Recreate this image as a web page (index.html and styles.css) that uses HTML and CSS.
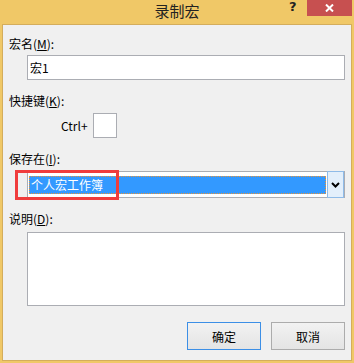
FILE: index.html
```html
<!DOCTYPE html>
<html lang="zh-CN">
<head>
  <meta charset="UTF-8">
  <meta name="viewport" content="width=device-width, initial-scale=1.0">
  <title>录制宏</title>
  <link rel="stylesheet" href="styles.css">
</head>
<body>
  <div class="window">
    <div class="titlebar">
      <span class="title">录制宏</span>
      <span class="help">?</span>
      <span class="close">
        <svg width="9" height="8" viewBox="0 0 9 8"><path d="M1 0.5 L8 7.5 M8 0.5 L1 7.5" stroke="#fff" stroke-width="2"/></svg>
      </span>
    </div>

    <div class="client">
      <div class="label">宏名(<u>M</u>):</div>
      <div class="field name-field">宏1</div>

      <div class="label gap">快捷键(<u>K</u>):</div>
      <div class="shortcut">
        <span>Ctrl+</span>
        <span class="key-box"></span>
      </div>

      <div class="label gap">保存在(<u>I</u>):</div>
      <div class="select">
        <div class="selected">个人宏工作簿</div>
        <div class="arrow">
          <svg width="9" height="6" viewBox="0 0 9 6"><path d="M1 1 L4.5 4.5 L8 1" fill="none" stroke="#000" stroke-width="2"/></svg>
        </div>
        <div class="highlight"></div>
      </div>

      <div class="label gap">说明(<u>D</u>):</div>
      <div class="field desc-field"></div>

      <div class="buttons">
        <button class="btn default">确定</button>
        <button class="btn">取消</button>
      </div>
    </div>
  </div>
</body>
</html>
```

FILE: styles.css
```css
body {
  margin: 0;
  font-family: "Noto Sans CJK SC", "Microsoft YaHei", sans-serif;
  font-size: 12px;
  color: #000;
}

.window {
  width: 354px;
  height: 363px;
  background: #f0c867;
  padding: 0 2px 2px 2px;
  box-sizing: border-box;
  display: flex;
  flex-direction: column;
}

.titlebar {
  height: 24px;
  position: relative;
  display: flex;
  justify-content: center;
  align-items: center;
}

.title {
  font-size: 15px;
  line-height: 20px;
  color: #222;
  margin-top: -2px;
}

.help {
  position: absolute;
  left: 287px;
  top: 0;
  font-family: "DejaVu Sans", sans-serif;
  font-weight: bold;
  font-size: 13px;
  line-height: 14px;
  color: #222;
}

.close {
  position: absolute;
  right: 0;
  top: 0;
  width: 45px;
  height: 16px;
  background: #c75050;
  display: flex;
  justify-content: center;
  align-items: center;
}

.client {
  flex: 1;
  background: #f0f0f0;
  border: 1px solid #d4ad5c;
  padding: 11px 6px 0 6px;
  display: flex;
  flex-direction: column;
}

.label {
  line-height: 16px;
  height: 16px;
}

.label u {
  text-decoration: underline;
  text-underline-offset: 1px;
}

.label.gap {
  margin-top: 13px;
}

.field {
  margin-left: 18px;
  background: #fff;
  border: 1px solid #abadb3;
  box-sizing: border-box;
}

.name-field {
  margin-top: 3px;
  height: 25px;
  line-height: 23px;
  padding-left: 2px;
}

.shortcut {
  margin-top: 4px;
  padding-left: 52px;
  display: flex;
  align-items: center;
  gap: 5px;
}

.key-box {
  width: 24px;
  height: 25px;
  background: #fff;
  border: 1px solid #abadb3;
  box-sizing: border-box;
}

.select {
  position: relative;
  margin-top: 4px;
  margin-left: 18px;
  height: 27px;
  background: #fff;
  border: 1px solid #abadb3;
  box-sizing: border-box;
  display: flex;
  padding: 4px 0 3px 1px;
}

.selected {
  flex: 1;
  background: #3399ff;
  color: #fff;
  line-height: 18px;
  padding-left: 2px;
  outline: 1px dotted #e8953a;
  outline-offset: -1px;
}

.arrow {
  width: 17px;
  margin: -5px 0 -4px 1px;
  background: #e3effb;
  border: 1px solid #8fbbe8;
  box-sizing: border-box;
  display: flex;
  justify-content: center;
  align-items: center;
}

.highlight {
  position: absolute;
  left: -13px;
  top: -2px;
  width: 104px;
  height: 30px;
  border: 3px solid #f03c3c;
  box-sizing: border-box;
}

.desc-field {
  margin-top: 5px;
  height: 74px;
}

.buttons {
  margin-top: 16px;
  display: flex;
  justify-content: flex-end;
  gap: 10px;
}

.btn {
  width: 74px;
  height: 28px;
  font-family: inherit;
  font-size: 12px;
  background: linear-gradient(#f2f2f2, #e4e4e4);
  border: 1px solid #acacac;
  padding: 0;
}

.btn.default {
  border-color: #3c8fe6;
}
```
